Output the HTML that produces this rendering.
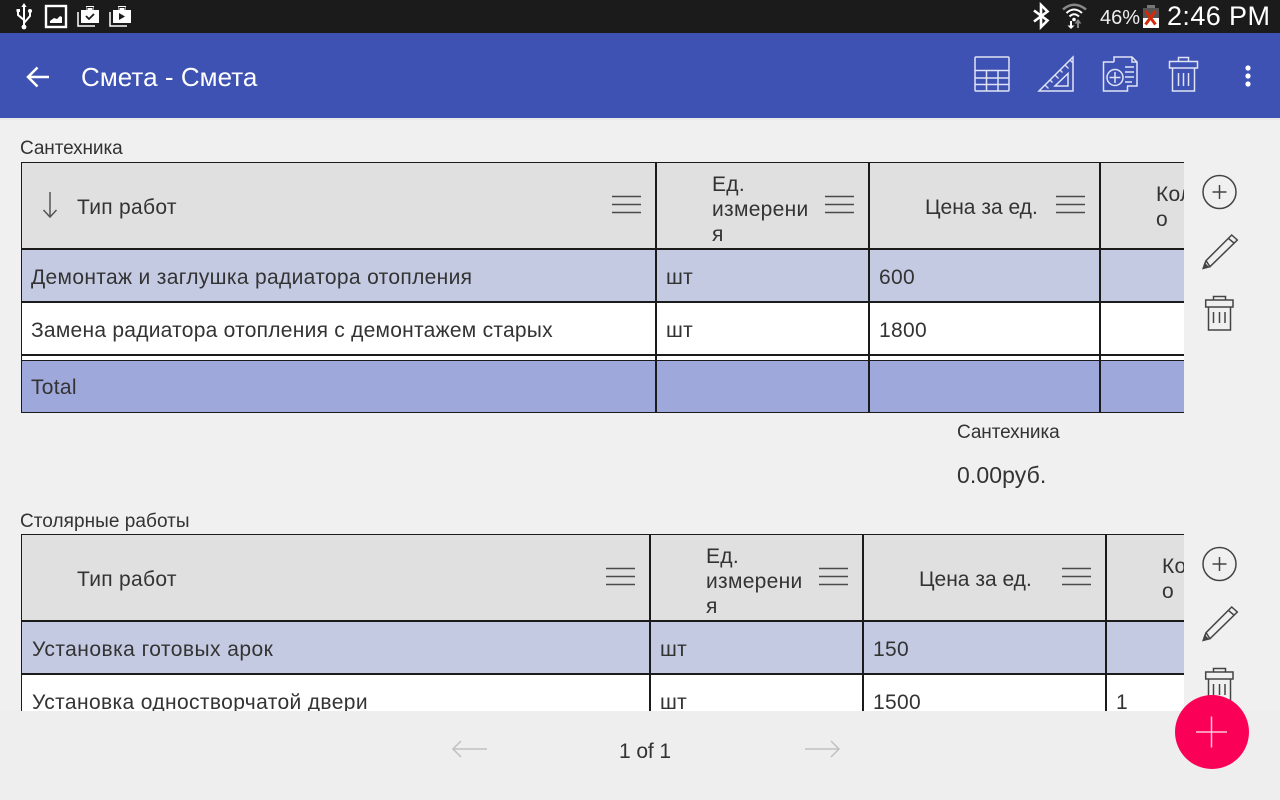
<!DOCTYPE html>
<html><head><meta charset="utf-8">
<style>
html,body{margin:0;padding:0;width:1280px;height:800px;overflow:hidden;background:#f0f0f0;font-family:"Liberation Sans",sans-serif;color:#333}
div,span{position:absolute;white-space:nowrap}
svg{position:absolute;overflow:visible}
.clip{overflow:hidden}
.t{font-size:21px;line-height:25px;letter-spacing:.3px;color:#333}
.b{background:#1b1b1b}
</style></head><body>
<div style="left:0;top:0;width:1280px;height:33px;background:#1b1b1b"></div>
<div style="left:0;top:33px;width:1280px;height:85px;background:#3e52b4"></div>
<div style="left:0;top:118px;width:1280px;height:2px;background:#e8e8e8"></div>

<!-- status icons left -->
<svg style="left:0;top:0" width="140" height="33" fill="none" stroke="#fff">
<path d="M24 5V28M24 20L18 15V11M24 23L30 16V12" stroke-width="2"/>
<circle cx="24" cy="27" r="2.4" fill="#fff" stroke="none"/>
<path d="M24 3l-2.6 4h5.2zM16.500 9h3.500v3h-3.500z" fill="#fff" stroke="none"/>
<circle cx="30" cy="11" r="2" fill="#fff" stroke="none"/>
<rect x="46" y="6" width="20" height="21" stroke-width="2.400"/>
<path d="M50 23v-2l4-3 3 1 3-3 2 1v6z" fill="#fff" stroke="none"/>
<path d="M78 12v14h17" stroke-width="1.500"/>
<path d="M81 10h18v13H81zM86 10V6h8v4" fill="#fff" stroke="none"/>
<path d="M87 10V7.500h6V10" stroke="#1b1b1b" stroke-width="1"/>
<path d="M86 16l3 3 5-5" stroke="#1b1b1b" stroke-width="1.800"/>
<path d="M110 12v14h17" stroke-width="1.500"/>
<path d="M113 10h18v13h-18zM118 10V6h8v4" fill="#fff" stroke="none"/>
<path d="M119 10V7.500h6V10" stroke="#1b1b1b" stroke-width="1"/>
<path d="M119 13l6 3.500-6 3.500z" fill="#1b1b1b" stroke="none"/>
</svg>

<!-- status right -->
<svg style="left:1020px;top:0" width="140" height="33" fill="none" stroke="#fff">
<path d="M14 10.500L27.500 20.500 21 27V5l6.500 6.500L14 21.500" stroke-width="2.600"/>
<path d="M43 9.500Q54 0 66 9.500" stroke="#888" stroke-width="2.500"/>
<path d="M46.500 13Q54 6 62 13" stroke="#fff" stroke-width="2"/>
<path d="M49.500 16.500Q54 12 59 16.500" stroke="#fff" stroke-width="2"/>
<circle cx="54" cy="19.500" r="1.800" fill="#fff" stroke="none"/>
<path d="M51 21v6" stroke-width="2"/><path d="M47.500 25.500h7L51 29z" fill="#fff" stroke="none"/>
<path d="M58 20v8" stroke="#888" stroke-width="2"/><path d="M54.500 23.500h7L58 19z" fill="#888" stroke="none"/>
<rect x="123" y="8" width="16" height="10" fill="#555" stroke="none"/>
<rect x="127" y="5" width="8" height="3" fill="#777" stroke="none"/>
<rect x="123" y="18" width="16" height="10" fill="#fff" stroke="none"/>
<path d="M125.500 11l10 13.500M135.500 11l-10 13.500" stroke="#d42a0a" stroke-width="3"/>
</svg>
<div style="left:1100px;top:5px;font-size:20px;line-height:26px;color:#eee">46%</div>
<div style="left:1167px;top:0;font-size:27px;line-height:33px;color:#fff;letter-spacing:.4px">2:46 PM</div>

<!-- app bar -->
<svg style="left:0;top:33px" width="60" height="85" fill="none" stroke="#fff" stroke-width="2.500"><path d="M49 44H28.500M37.500 34.500L28 44l9.500 9.500"/></svg>
<div style="left:81px;top:61px;font-size:26px;line-height:32px;color:#fff;letter-spacing:.05px">Смета - Смета</div>

<svg style="left:960px;top:45px" width="320" height="60" fill="none" stroke="#dfe3f5" stroke-width="1.500">
<rect x="15" y="12" width="34" height="34" rx="1"/>
<path d="M15 25.500H49M15 33H49M15 39.500H49M26.500 25.500V46M38 25.500V46"/>
<path d="M113 12V46H79z"/>
<path d="M108 28.500V41H95z"/>
<path d="M85 40l3.500 3.500M90 35l2.500 2.500M95 30l3.500 3.500M100 25l2.500 2.500M105 20l3.500 3.500M110 15l2.500 2.500" stroke-width="1.300"/>
<path d="M154 17h-10.500v29h24v-5M154 17v-5h18l5 5v24h-10M172 12v5h5"/>
<circle cx="155" cy="32.500" r="8"/><path d="M155 27v11M149.500 32.500h11"/>
<path d="M165 22h9M165 27h9M165 32h9M165 37h7"/>
<rect x="209.500" y="16.500" width="28" height="6.500"/>
<path d="M218.500 16.500v-4h10v4M212.500 23v23h22V23M218.500 28v13M223.500 28v13M228.500 28v13"/>
<circle cx="288" cy="23" r="2.600" fill="#fff" stroke="none"/><circle cx="288" cy="31" r="2.600" fill="#fff" stroke="none"/><circle cx="288" cy="39" r="2.600" fill="#fff" stroke="none"/>
</svg>

<!-- Section 1 -->
<div style="left:20px;top:137px;font-size:19px;line-height:23px;color:#333;letter-spacing:-.1px">Сантехника</div>
<div class="clip" style="left:21px;top:162px;width:1163px;height:251px;background:#fff">
  <div style="left:0;top:1px;width:1163px;height:85px;background:#e0e0e0"></div>
  <div style="left:0;top:88px;width:1163px;height:51px;background:#c5cae3"></div>
  <div style="left:0;top:199px;width:1163px;height:51px;background:#9fa8da"></div>
  <div class="b" style="left:0;top:0;width:1163px;height:1px"></div>
  <div class="b" style="left:0;top:86px;width:1163px;height:2px"></div>
  <div class="b" style="left:0;top:139px;width:1163px;height:2px"></div>
  <div class="b" style="left:0;top:192px;width:1163px;height:2px"></div>
  <div class="b" style="left:0;top:198px;width:1163px;height:1px"></div>
  <div class="b" style="left:0;top:250px;width:1163px;height:1px"></div>
  <div class="b" style="left:0;top:0;width:1px;height:251px"></div>
  <div class="b" style="left:634px;top:0;width:2px;height:251px"></div>
  <div class="b" style="left:847px;top:0;width:2px;height:251px"></div>
  <div class="b" style="left:1078px;top:0;width:2px;height:251px"></div>
  <div class="t" style="left:56px;top:33px">Тип работ</div>
  <div class="t" style="left:691px;top:10px">Ед.<br>измерени<br>я</div>
  <div class="t" style="left:904px;top:33px;letter-spacing:0">Цена за ед.</div>
  <div class="t" style="left:1135px;top:20px">Кол<br>о</div>
  <div class="t" style="left:10px;top:103px;letter-spacing:.33px">Демонтаж и заглушка радиатора отопления</div>
  <div class="t" style="left:645px;top:103px">шт</div>
  <div class="t" style="left:858px;top:103px">600</div>
  <div class="t" style="left:10px;top:156px;letter-spacing:.25px">Замена радиатора отопления с демонтажем старых</div>
  <div class="t" style="left:645px;top:156px">шт</div>
  <div class="t" style="left:858px;top:156px">1800</div>
  <div class="t" style="left:10px;top:213px">Total</div>
  <svg style="left:0;top:0" width="1163" height="90" fill="none" stroke="#4a4a4a" stroke-width="1.500">
    <path d="M29 30V55M22.500 48l6.500 7 6.500-7" stroke="#555"/>
    <path d="M591 34.500h29M591 42.500h29M591 50.500h29"/>
    <path d="M804 34.500h29M804 42.500h29M804 50.500h29"/>
    <path d="M1035 34.500h29M1035 42.500h29M1035 50.500h29"/>
  </svg>
</div>
<div style="left:957px;top:421px;font-size:19px;line-height:23px;color:#333;letter-spacing:-.1px">Сантехника</div>
<div style="left:957px;top:460px;font-size:23px;line-height:30px;color:#333;letter-spacing:.1px">0.00руб.</div>

<!-- Section 2 -->
<div style="left:20px;top:510px;font-size:19px;line-height:23px;color:#333;letter-spacing:.05px">Столярные работы</div>
<div class="clip" style="left:21px;top:534px;width:1163px;height:177px;background:#fff">
  <div style="left:0;top:1px;width:1163px;height:85px;background:#e0e0e0"></div>
  <div style="left:0;top:88px;width:1163px;height:51px;background:#c5cae3"></div>
  <div class="b" style="left:0;top:0;width:1163px;height:1px"></div>
  <div class="b" style="left:0;top:86px;width:1163px;height:2px"></div>
  <div class="b" style="left:0;top:139px;width:1163px;height:2px"></div>
  <div class="b" style="left:0;top:0;width:1px;height:177px"></div>
  <div class="b" style="left:628px;top:0;width:2px;height:177px"></div>
  <div class="b" style="left:841px;top:0;width:2px;height:177px"></div>
  <div class="b" style="left:1084px;top:0;width:2px;height:177px"></div>
  <div class="t" style="left:56px;top:33px">Тип работ</div>
  <div class="t" style="left:685px;top:10px">Ед.<br>измерени<br>я</div>
  <div class="t" style="left:898px;top:33px;letter-spacing:0">Цена за ед.</div>
  <div class="t" style="left:1141px;top:20px">Кол<br>о</div>
  <div class="t" style="left:11px;top:103px;letter-spacing:.45px">Установка готовых арок</div>
  <div class="t" style="left:639px;top:103px">шт</div>
  <div class="t" style="left:852px;top:103px">150</div>
  <div class="t" style="left:11px;top:156px;letter-spacing:.37px">Установка одностворчатой двери</div>
  <div class="t" style="left:639px;top:156px">шт</div>
  <div class="t" style="left:852px;top:156px">1500</div>
  <div class="t" style="left:1095px;top:156px">1</div>
  <svg style="left:0;top:0" width="1163" height="90" fill="none" stroke="#4a4a4a" stroke-width="1.500">
    <path d="M585 34.500h29M585 42.500h29M585 50.500h29"/>
    <path d="M798 34.500h29M798 42.500h29M798 50.500h29"/>
    <path d="M1041 34.500h29M1041 42.500h29M1041 50.500h29"/>
  </svg>
</div>

<!-- side icons -->
<svg style="left:1184px;top:160px" width="70" height="180" fill="none" stroke="#444" stroke-width="1.500">
<circle cx="35.500" cy="32" r="16.500"/><path d="M35.500 25v14M28.500 32h14"/>
<path d="M19.300 108.300L22 100.700 47.700 75 53.300 80 26 106.700zM22 100.700L26 106.700M44.300 78.300L50.300 83.300"/>
<path d="M19.300 108.300l1.500-4.500 3 3z" fill="#444"/>
<rect x="21.700" y="140" width="27.300" height="7"/><path d="M29.500 140v-3.500h12v3.500M24.500 147v23h22v-23M29.500 152v11M35.500 152v11M41 152v11"/>
</svg>
<svg style="left:1184px;top:532px" width="70" height="180" fill="none" stroke="#444" stroke-width="1.500">
<circle cx="35.500" cy="32" r="16.500"/><path d="M35.500 25v14M28.500 32h14"/>
<path d="M19.300 108.300L22 100.700 47.700 75 53.300 80 26 106.700zM22 100.700L26 106.700M44.300 78.300L50.300 83.300"/>
<path d="M19.300 108.300l1.500-4.500 3 3z" fill="#444"/>
<rect x="21.700" y="140" width="27.300" height="7"/><path d="M29.500 140v-3.500h12v3.500M24.500 147v23h22v-23M29.500 152v11M35.500 152v11M41 152v11"/>
</svg>

<!-- bottom -->
<div style="left:0;top:711px;width:1280px;height:89px;background:#eeeeee"></div>
<svg style="left:430px;top:700px" width="430" height="80" fill="none" stroke="#c0c0c0" stroke-width="1.500">
<path d="M57 49H23M31 41l-8 8 8 8"/>
<path d="M375 49h34M401 41l8 8-8 8"/>
</svg>
<div style="left:619px;top:738px;font-size:21px;line-height:27px;color:#333;letter-spacing:-.1px">1 of 1</div>

<!-- FAB -->
<div style="left:1175px;top:695px;width:74px;height:74px;border-radius:50%;background:#fb0057"></div>
<svg style="left:1175px;top:695px" width="74" height="74" stroke="#ffc4d8" stroke-width="1.500" fill="none"><path d="M36.500 21.500v31M21 37h31"/></svg>
</body></html>
